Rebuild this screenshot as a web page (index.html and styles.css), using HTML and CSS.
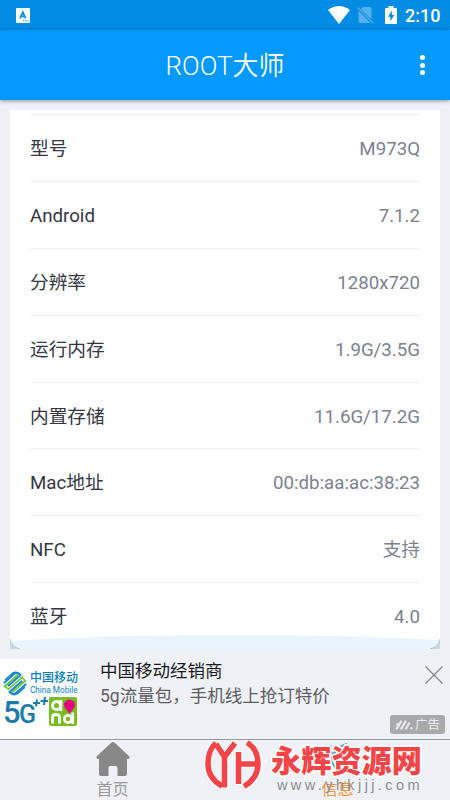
FILE: index.html
```html
<!DOCTYPE html>
<html lang="zh-CN">
<head>
<meta charset="utf-8">
<title>ROOT大师</title>
<link rel="stylesheet" href="styles.css">
</head>
<body>
<div class="status">
  <svg class="status-app" width="14" height="15" viewBox="0 0 14 15"><rect width="14" height="15" rx="1" fill="#fff"/><path d="M4 10.300 6.800 4 9.600 10.300M5 8.300h3.600" fill="none" stroke="#028ce4" stroke-width="1.700"/><path d="M7 12.800h1.300M9.200 12.800h1.300M11.200 12.800h1.300" stroke="#028ce4"/></svg>
  <div class="status-right">
    <svg class="wifi" width="22" height="18" viewBox="0 0 22 18"><path d="M0 4Q11-4 22 4L11 18Z" fill="#fff"/></svg>
    <svg class="sim" width="17" height="18" viewBox="0 0 17 18"><path d="M6 1h7q1.500 0 1.500 1.500V13.500L3.700 3.100ZM1.500 4.500 13.500 17H3q-1.500 0-1.500-1.500Z" fill="#55b1ee"/><path d="m.7 1.700 15.500 15.500" stroke="#55b1ee" stroke-width="1.200"/></svg>
    <svg class="battery" width="12" height="18" viewBox="0 0 12 18"><path d="M3.500 0h5v2H11q1 0 1 1v14q0 1-1 1H1q-1 0-1-1V3q0-1 1-1h2.500Z" fill="#fff"/><path d="M7 4.500 3 10.700h2.400v4.500L9.200 9H6.800Z" fill="#028ce4"/></svg>
    <span class="clock">2:10</span>
  </div>
</div>
<header class="bar">
  <h1>ROOT大师</h1>
  <div class="more"><i></i><i></i><i></i></div>
</header>
<main class="content">
  <section class="card">
    <dl class="rows">
      <div class="row"><dt>型号</dt><dd>M973Q</dd></div>
      <div class="row"><dt>Android</dt><dd>7.1.2</dd></div>
      <div class="row"><dt>分辨率</dt><dd>1280x720</dd></div>
      <div class="row"><dt>运行内存</dt><dd>1.9G/3.5G</dd></div>
      <div class="row"><dt>内置存储</dt><dd>11.6G/17.2G</dd></div>
      <div class="row"><dt>Mac地址</dt><dd>00:db:aa:ac:38:23</dd></div>
      <div class="row"><dt>NFC</dt><dd>支持</dd></div>
      <div class="row"><dt>蓝牙</dt><dd>4.0</dd></div>
    </dl>
    <svg class="wave" width="430" height="14" viewBox="0 0 430 14"><path d="M0 6Q95 0 215 0T430 5V14H0Z" fill="#e8f5fe"/><path d="M0 4Q1 12 10 14H0ZM430 4Q429 12 420 14h10Z" fill="#cbd9e3"/><path d="M0 4Q1 12 10 14M430 4Q429 12 420 14" fill="none" stroke="#b3c3ce"/></svg>
  </section>
</main>
<aside class="ad">
  <div class="ad-logo">
    <div class="cm">
      <svg width="24" height="25" viewBox="0 0 24 25" fill="none" stroke-width="2.200" stroke-linecap="round" stroke-linejoin="round"><path d="M1.500 11.500 11 3Q14 .5 17.500 4L5.500 14.500M22.500 13.500 13 22Q10 24.500 6.500 21L18.500 10.500" stroke="#1689cb"/><path d="M2.500 8.500 8 3.500Q10.500 1.200 13 1.400M21.500 16.500 16 21.500Q13.500 23.800 11 23.600" stroke="#1689cb" stroke-width="1.600"/><path d="M1.500 15 5.500 18.200 19.500 6M22.500 10 20 7.500M2 15l12.500-11M22 10 9.500 21" stroke="#71c346" stroke-width="1.700"/></svg>
      <div class="cm-name"><b>中国移动</b><span>China Mobile</span></div>
    </div>
    <div class="brands">
      <div class="fiveg"><b>5</b><span>G</span><svg width="15" height="11" viewBox="0 0 15 11"><path d="M0 6h7M4 2.500 3 9.500M7.500 4H15M12 0l-1 8" fill="none" stroke="#1c7ca9" stroke-width="2"/></svg></div>
      <div class="and">
        <svg width="28" height="29" viewBox="0 0 28 29"><rect width="28" height="29" rx="2" fill="#77bd21"/><g fill="none" stroke="#fff" stroke-width="2.800"><circle cx="7.500" cy="8.500" r="4"/><path d="M11.800 3v11M3.500 26.500v-6q0-3 3.500-3t3.500 3v6"/><circle cx="19" cy="22" r="3.600"/><path d="M23.700 15.500V27"/></g><path d="M20.500 16.500Q15 10.500 15 8a5.500 5.500 0 0 1 11 0Q26 10.500 20.500 16.500Z" fill="#e4007f"/></svg>
      </div>
    </div>
  </div>
  <div class="ad-text"><div class="ad-title">中国移动经销商</div><div class="ad-desc">5g流量包，手机线上抢订特价</div></div>
  <div class="ad-side">
    <svg class="close" width="18" height="18" viewBox="0 0 18 18"><path d="m.5.5 17 17M17.500.5l-17 17" stroke="#858587" stroke-width="1.200"/></svg>
    <div class="ad-tag"><svg width="18" height="12" viewBox="0 0 18 12" stroke="#e9e9eb" stroke-width="2.400" stroke-linecap="round"><path d="M1.800 9.500 6 2.500M6.300 9.500 10.500 2.500M11 9.500 14 4.500M2.300 5.500l.3-.5M16.300 9.300h.1"/></svg><span>广告</span></div>
  </div>
</aside>
<nav class="tabs">
  <div class="tab">
    <svg width="34" height="35" viewBox="0 0 34 35"><path d="M15 1Q17-.8 19 1L33.200 14.200Q34.500 16.500 32 17H31V32q0 2-2 2H21.500V26q0-2-2-2h-5q-2 0-2 2v8H5q-2 0-2-2V17H2Q-.5 16.500.8 14.200Z" fill="#888"/></svg>
    <span>首页</span>
  </div>
  <div class="tab active">
    <svg width="34" height="35" viewBox="0 0 34 35"><path d="M3 8q8 0 12 8t3 16M10 3q-3 10 2 19t16 8M26 2q-9 2-13 10T5 27M25 2l3 9q-2 8-10 15" fill="none" stroke="#4f9fc5" stroke-width="2"/></svg>
    <span>信息</span>
  </div>
</nav>
<div class="mark">
  <svg width="58" height="52" viewBox="0 0 58 52" fill="none"><g stroke="#fff" stroke-width="8"><path d="M12 1.500Q3.500 9 3.500 24q0 14 14 23M12.500 5 21 18 32 2M21 17v31M34.500 11v34M34.500 24H54M43 1.500Q54.500 9 54.500 24q0 14-15 23"/></g><g stroke="#f34447" stroke-width="5.500"><path d="M12 3Q4 10 4 24q0 14 14 22M12 4 20.500 17 31 3M20.500 16v31.500M34.500 12v32M34.500 24H54M43 2.500Q54 9 54 24q0 14-14 22.500"/></g></svg>
  <div class="mark-words"><strong>永辉资源网</strong><span>www.yhkjjj.com</span></div>
</div>
</body>
</html>
```
FILE: styles.css
```css
* { box-sizing: border-box; }
body {
  margin: 0;
  width: 450px;
  height: 800px;
  overflow: hidden;
  display: flex;
  flex-direction: column;
  position: relative;
  background: #eff1f6;
  font-family: Roboto, "Noto Sans CJK SC", sans-serif;
}
svg { display: block; flex: none; }
.status {
  height: 30px;
  flex: none;
  display: flex;
  justify-content: space-between;
  padding: 0 10px 0 16px;
  background: #028ce4;
}
.status-app { margin-top: 8px; }
.status-right { display: flex; align-items: center; color: #fff; }
.sim { margin-left: 7px; }
.battery { margin-left: 11px; }
.clock { margin: 2px 0 0 8px; font-size: 18px; line-height: 30px; font-weight: 500; width: 35px; white-space: nowrap; }
.bar {
  height: 70px;
  flex: none;
  position: relative;
  display: flex;
  align-items: center;
  justify-content: center;
  background: #0399ff;
  box-shadow: 0 1px 4px rgba(0, 0, 0, .4);
}
.bar h1 { margin: 2px 0 0; color: #fff; font-size: 26px; line-height: 36px; font-weight: 350; }
.more { position: absolute; right: 25px; top: 25px; display: flex; flex-direction: column; gap: 2.500px; }
.more i { width: 5px; height: 5px; border-radius: 50%; background: #fff; }
.content { height: 559px; flex: none; padding: 10px 10px 0; }
.card { height: 539px; background: #fff; display: flex; flex-direction: column; }
.rows { margin: 4px 20px 0; height: 521px; flex: none; }
.row {
  height: 66.900px;
  display: flex;
  align-items: center;
  justify-content: space-between;
  border-top: 1px solid #eeeff1;
  padding-top: 2px;
  font-size: 18.700px;
  line-height: 28px;
}
.row dt { color: #343642; }
.row dd { margin: 0; color: #7c8190; }
.ad { height: 80px; flex: none; display: flex; }
.ad-logo { width: 80px; height: 80px; background: #fff; padding: 12px 3px 0 3px; }
.cm { display: flex; gap: 3px; height: 26px; }
.cm-name { display: flex; flex-direction: column; color: #087ebd; white-space: nowrap; }
.cm-name b { font-size: 12px; line-height: 15px; font-weight: 500; }
.cm-name span { font-size: 8.200px; line-height: 9px; font-weight: 400; }
.brands { display: flex; justify-content: space-between; height: 30px; }
.fiveg { position: relative; display: flex; width: 46px; color: #1c7ca9; }
.fiveg b { width: 16px; font-size: 31px; line-height: 32px; font-weight: 500; }
.fiveg span { padding-top: 5px; font-size: 25px; line-height: 26px; font-weight: 500; }
.fiveg svg { position: absolute; left: 30px; top: 0; }
.ad-text { flex: 1; padding-left: 20px; }
.ad-title { color: #19191b; font-size: 17.500px; line-height: 25px; }
.ad-desc { color: #5d5d61; font-size: 17.500px; line-height: 24px; white-space: nowrap; }
.ad-side { width: 60px; display: flex; flex-direction: column; align-items: flex-end; justify-content: space-between; padding: 7px 5px 5px 0; }
.close { margin-right: 2px; }
.ad-tag { width: 55px; height: 19px; border-radius: 3px; background: #a8a9ad; color: #ececef; display: flex; align-items: center; justify-content: center; gap: 2px; font-size: 12.500px; line-height: 19px; }
.tabs { flex: 1; display: flex; border-top: 1px solid #98999d; }
.tab { width: 225px; display: flex; flex-direction: column; align-items: center; gap: 2px; padding-top: 2px; color: #99999d; font-size: 16px; line-height: 22px; }
.active { color: #f09438; }
.mark { position: absolute; left: 204px; top: 740px; display: flex; gap: 9px; }
.mark-words { width: 160px; padding-top: 4px; display: flex; flex-direction: column; white-space: nowrap; paint-order: stroke fill; }
.mark-words strong { color: #f34447; font-size: 30.200px; line-height: 35px; font-weight: 900; -webkit-text-stroke: 3px #fff; }
.mark-words span { padding-left: 6px; color: #8c8c91; font-family: "Liberation Sans", sans-serif; font-size: 14.500px; letter-spacing: 3.400px; line-height: 12px; }
```
